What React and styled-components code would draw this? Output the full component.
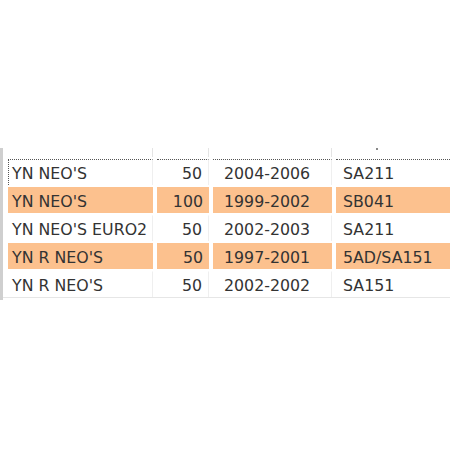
import React from "react";
import styled, { createGlobalStyle } from "styled-components";

const Global = createGlobalStyle`
  html, body { margin: 0; padding: 0; background: #fff; }
  body { font-family: "DejaVu Sans", Verdana, sans-serif; }
`;

const Frame = styled.div`
  margin-top: 148px;
  width: 450px;
  height: 152px;
  border-left: 3px solid #cfcfcf;
  box-sizing: border-box;
  overflow: hidden;
`;

const Grid = styled.div`
  display: grid;
  grid-template-columns: 145px 52px 119px 120px;
  column-gap: 4px;
  row-gap: 2px;
  padding-left: 5px;
  border-bottom: 1px solid #e6e6e6;
`;

const Head = styled.div`
  height: 9px;
  border-right: 1px solid #e4e4e4;
  position: relative;
`;

const Dot = styled.span`
  position: absolute;
  left: 40px;
  top: 0;
  width: 2px;
  height: 2px;
  background: #888;
`;

const Cell = styled.div`
  height: 26px;
  line-height: 27px;
  font-size: 15.8px;
  color: #333;
  white-space: nowrap;
  overflow: hidden;
  box-sizing: border-box;
  background: ${(p) => (p.$hl ? "#fcc18e" : "#fff")};
  text-align: ${(p) => (p.$right ? "right" : "left")};
  padding: ${(p) => p.$pad};
  border-right: ${(p) => (p.$hl ? "none" : "1px solid #efefef")};
  border-top: ${(p) => (p.$focus ? "1px dotted #555" : "1px solid transparent")};
  border-left: ${(p) => (p.$first ? "1px dotted #555" : "none")};
`;

const rows = [
  ["YN NEO'S", "50", "2004-2006", "SA211"],
  ["YN NEO'S", "100", "1999-2002", "SB041"],
  ["YN NEO'S EURO2", "50", "2002-2003", "SA211"],
  ["YN R NEO'S", "50", "1997-2001", "5AD/SA151"],
  ["YN R NEO'S", "50", "2002-2002", "SA151"],
];

const pads = ["0 0 0 4px", "0 6px 0 0", "0 0 0 11px", "0 0 0 7px"];

export default function App() {
  return (
    <>
      <Global />
      <Frame>
        <Grid>
          <Head />
          <Head />
          <Head />
          <Head>
            <Dot />
          </Head>
          {rows.map((r, i) =>
            r.map((v, j) => (
              <Cell
                key={`${i}-${j}`}
                $hl={i % 2 === 1}
                $right={j === 1}
                $pad={j === 0 && i === 0 ? "0 0 0 3px" : pads[j]}
                $focus={i === 0}
                $first={i === 0 && j === 0}
              >
                {v}
              </Cell>
            ))
          )}
        </Grid>
      </Frame>
    </>
  );
}
